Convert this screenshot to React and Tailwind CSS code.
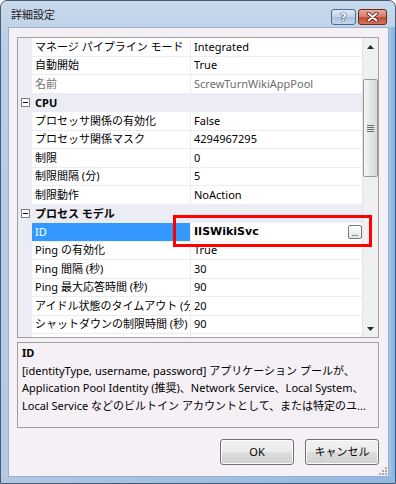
import React from "react";

const LINE = "border-[#ececf5]";

function MinusBox() {
  return (
    <svg width="9" height="9" viewBox="0 0 9 9">
      <rect x="0.5" y="0.5" width="8" height="8" fill="#ffffff" stroke="#7f7f7f" />
      <path d="M2 4.5h5" stroke="#000000" strokeWidth="1" />
    </svg>
  );
}

function Category({ label }) {
  return (
    <div className="flex h-[18.5px] shrink-0 items-center bg-[#ececf5]">
      <div className="flex w-[14px] shrink-0 justify-center pl-[1px]">
        <MinusBox />
      </div>
      <span className="pl-[3px] font-bold text-black">{label}</span>
    </div>
  );
}

function Row({ name, value, gray, selected, children }) {
  return (
    <div className="flex h-[18.5px] shrink-0">
      <div className="w-[14px] shrink-0 bg-[#ececf5]" />
      <div
        className={
          "flex w-[159px] shrink-0 items-center overflow-hidden whitespace-nowrap border-r border-b border-[#ececf5] pl-[3px] " +
          (selected ? "bg-[#3399ff] text-white" : gray ? "text-[#6d6d6d]" : "text-black")
        }
      >
        {name}
      </div>
      <div
        className={
          "flex min-w-0 flex-1 items-center whitespace-nowrap border-b border-[#ececf5] pl-[3px] " +
          (gray ? "text-[#6d6d6d]" : "text-black")
        }
      >
        {value}
        {children}
      </div>
    </div>
  );
}

function Scrollbar() {
  return (
    <div className="flex w-[16px] shrink-0 flex-col bg-[#f0f0f0] border-l border-[#e3e3e3]">
      <div className="flex h-[17px] shrink-0 items-center justify-center">
        <svg width="7" height="4" viewBox="0 0 7 4">
          <path d="M0 4 L3.5 0 L7 4 Z" fill="#2a2a2a" />
        </svg>
      </div>
      <div className="flex-1">
        <div className="mx-[0px] mt-[24px] flex h-[98px] items-center justify-center rounded-[2px] border border-[#979797] bg-[linear-gradient(to_right,#f6f6f6,#e2e2e2_60%,#d6d6d6)]">
          <div className="flex flex-col gap-[1px]">
            <div className="h-[1px] w-[7px] bg-[#6b6b6b]" />
            <div className="h-[1px] w-[7px] bg-[#6b6b6b]" />
            <div className="h-[1px] w-[7px] bg-[#6b6b6b]" />
            <div className="h-[1px] w-[7px] bg-[#6b6b6b]" />
          </div>
        </div>
      </div>
      <div className="flex h-[17px] shrink-0 items-center justify-center">
        <svg width="7" height="4" viewBox="0 0 7 4">
          <path d="M0 0 L3.5 4 L7 0 Z" fill="#2a2a2a" />
        </svg>
      </div>
    </div>
  );
}

function WinButton({ children }) {
  return (
    <button className="h-[26px] w-[74px] rounded-[3px] border border-[#707070] bg-[linear-gradient(to_bottom,#f2f2f2_0%,#ebebeb_48%,#dddddd_52%,#cfcfcf_100%)] text-[11px] text-black shadow-[inset_0_0_0_1px_#fcfcfc]">
      {children}
    </button>
  );
}

export default function App() {
  return (
    <div className="relative flex h-[484px] w-[396px] flex-col overflow-hidden rounded-t-[7px] border border-[#4a5a70] bg-[linear-gradient(to_bottom,#c8d9ec,#b9cee6_10%,#b4cae3)] font-['Noto_Sans','Noto_Sans_CJK_JP',sans-serif] text-[11px]">
      {/* title bar */}
      <div className="flex h-[26px] shrink-0 items-start">
        <div className="pl-[10px] pt-[6px] text-[11px] leading-[16px] text-[#1b1b1b]">詳細設定</div>
        <div className="ml-auto flex gap-[2px] pr-[8px] pt-[8px]">
          <div className="flex h-[16px] w-[25px] items-center justify-center rounded-[3px] border border-[#4f6a8c] bg-[linear-gradient(to_bottom,#dfe9f5,#bfd2e8_50%,#a9c1de_51%,#c4d7ee)]">
            <span className="font-['DejaVu_Sans',sans-serif] text-[11px] font-bold leading-none text-white [text-shadow:0_0_1px_#24384f,0_0_1px_#24384f,0_0_1px_#24384f]">
              ?
            </span>
          </div>
          <div className="flex h-[16px] w-[29px] items-center justify-center rounded-[3px] border border-[#6b2a22] bg-[linear-gradient(to_bottom,#e8a99c,#d47a66_50%,#c24a33_51%,#d9735a)]">
            <svg width="13" height="10" viewBox="0 0 13 10">
              <path d="M2.5 1.5 L10.5 8.5 M10.5 1.5 L2.5 8.5" stroke="#4a1a12" strokeWidth="3.6" strokeLinecap="round" />
              <path d="M2.5 1.5 L10.5 8.5 M10.5 1.5 L2.5 8.5" stroke="#ffffff" strokeWidth="2" strokeLinecap="round" />
            </svg>
          </div>
        </div>
      </div>

      {/* middle */}
      <div className="flex min-h-0 flex-1">
        <div className="w-[7px] shrink-0" />
        <div className="flex w-[381px] shrink-0 flex-col border border-[#9aafc8] bg-[#f4f0f5] pl-[8px] pr-[9px] pt-[9px]">
          {/* property grid */}
          <div className="flex h-[301px] shrink-0 border border-[#a0a0a0] bg-white">
            <div className="flex min-w-0 flex-1 flex-col overflow-hidden">
              <Row name="マネージ パイプライン モード" value="Integrated" />
              <Row name="自動開始" value="True" />
              <Row name="名前" value="ScrewTurnWikiAppPool" gray />
              <Category label="CPU" />
              <Row name="プロセッサ関係の有効化" value="False" />
              <Row name="プロセッサ関係マスク" value="4294967295" />
              <Row name="制限" value="0" />
              <Row name="制限間隔 (分)" value="5" />
              <Row name="制限動作" value="NoAction" />
              <Category label="プロセス モデル" />
              <Row name="ID" selected>
                <span className="font-['DejaVu_Sans',sans-serif] text-[11px] font-bold">IISWikiSvc</span>
                <div className="ml-auto flex h-[14px] w-[14px] items-end justify-center rounded-[2px] border border-[#7a7a7a] bg-[linear-gradient(to_bottom,#ffffff,#e4e4e4)] pb-[1px]">
                  <span className="text-[8px] leading-[8px] text-black">...</span>
                </div>
              </Row>
              <Row name="Ping の有効化" value="True" />
              <Row name="Ping 間隔 (秒)" value="30" />
              <Row name="Ping 最大応答時間 (秒)" value="90" />
              <Row name="アイドル状態のタイムアウト (分)" value="20" />
              <Row name="シャットダウンの制限時間 (秒)" value="90" />
              <Row name="開始時間の制限 (秒)" value="90" />
            </div>
            <Scrollbar />
          </div>

          {/* description */}
          <div className="mt-[4px] h-[86px] shrink-0 border border-[#a0a0a0] pl-[4px] pt-[1px] leading-[17.5px] text-black">
            <div className="font-bold">ID</div>
            <div className="whitespace-nowrap">[identityType, username, password] アプリケーション プールが、</div>
            <div className="whitespace-nowrap">Application Pool Identity (推奨)、Network Service、Local System、</div>
            <div className="whitespace-nowrap">Local Service などのビルトイン アカウントとして、または特定のユ...</div>
          </div>

          {/* buttons */}
          <div className="mt-[11px] flex shrink-0 justify-end gap-[11px]">
            <WinButton>OK</WinButton>
            <WinButton>キャンセル</WinButton>
          </div>

          <div className="flex flex-1 items-end justify-end pb-[1px] pr-[0px]">
            <svg width="8" height="8" viewBox="0 0 8 8" className="-mr-[8px]">
              <g fill="#a9a9a9">
                <rect x="6" y="0" width="2" height="2" />
                <rect x="3" y="3" width="2" height="2" />
                <rect x="6" y="3" width="2" height="2" />
                <rect x="0" y="6" width="2" height="2" />
                <rect x="3" y="6" width="2" height="2" />
                <rect x="6" y="6" width="2" height="2" />
              </g>
            </svg>
          </div>
        </div>
        <div className="flex-1 bg-[linear-gradient(to_right,#a7c6e6,#7fb2e6)]" />
      </div>
      <div className="h-[6px] shrink-0 bg-[linear-gradient(to_right,#b0c7e2,#8fb8e4)]" />

      {/* annotation overlay */}
      <div className="pointer-events-none absolute left-[172px] top-[214px] h-[32px] w-[199px] border-[3px] border-[#ff0000]" />
    </div>
  );
}
